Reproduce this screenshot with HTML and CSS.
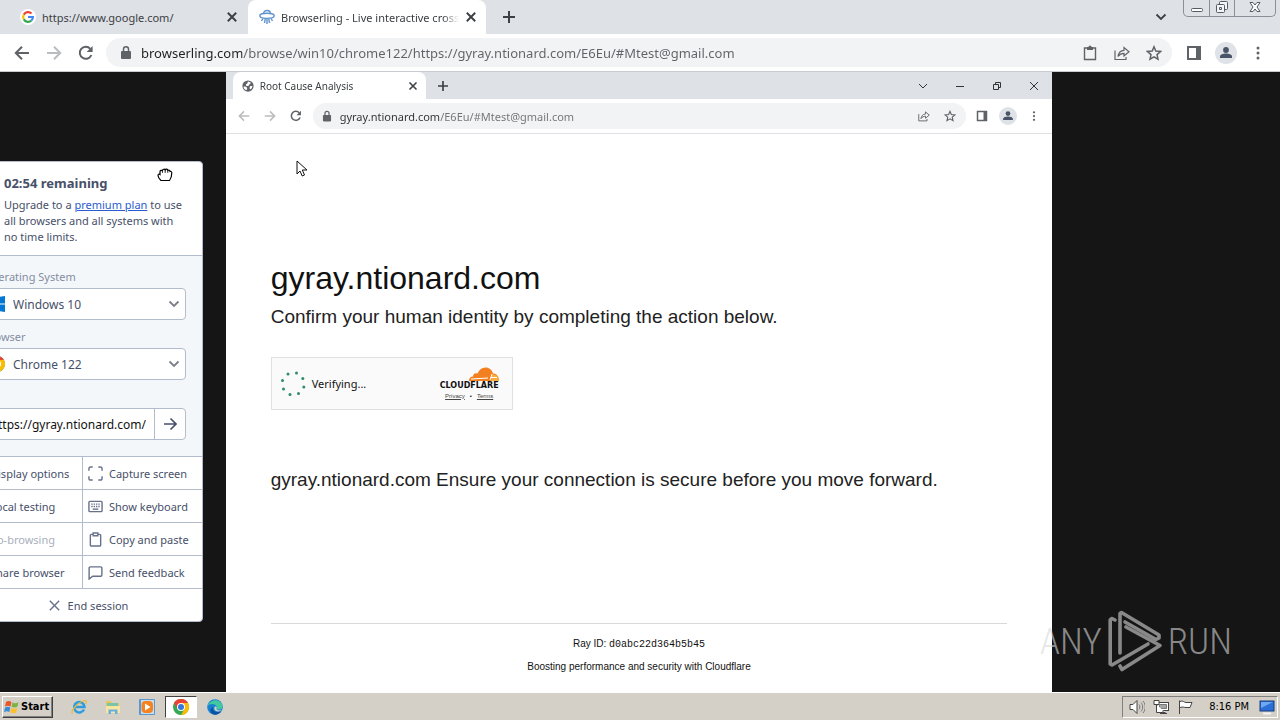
FILE: index.html
```html
<!DOCTYPE html>
<html lang="en">
<head>
  <meta charset="UTF-8">
  <meta name="viewport" content="width=device-width, initial-scale=1.0">
  <title>Browserling - Live interactive cross-browser testing</title>
  <link rel="stylesheet" href="styles.css">
</head>
<body>
  <!-- Shared icons -->
  <svg class="sprite" aria-hidden="true">
    <symbol id="i-back" viewBox="0 0 16 16"><path d="M15 8H2M8 1.8L1.8 8 8 14.2" fill="none" stroke="currentColor" stroke-width="2"/></symbol>
    <symbol id="i-forward" viewBox="0 0 16 16"><path d="M1 8h13M8 1.8L14.2 8 8 14.2" fill="none" stroke="currentColor" stroke-width="2"/></symbol>
    <symbol id="i-reload" viewBox="0 0 16 16"><path d="M13.4 10A6 6 0 1 1 12.3 3.800" fill="none" stroke="currentColor" stroke-width="2"/><path d="M14.600 1v6H8.600z" fill="currentColor"/></symbol>
    <symbol id="i-lock" viewBox="0 0 12 16"><rect x="1" y="6" width="10" height="8" rx="1" fill="currentColor"/><path d="M3.500 6.500V4.300a2.500 2.500 0 0 1 5 0v2.200" fill="none" stroke="currentColor" stroke-width="1.500"/></symbol>
    <symbol id="i-close" viewBox="0 0 10 10"><path d="M1.500 1.500l7 7M8.500 1.500l-7 7" fill="none" stroke="currentColor" stroke-width="1.600"/></symbol>
    <symbol id="i-plus" viewBox="0 0 12 12"><path d="M6 0v12M0 6h12" fill="none" stroke="currentColor" stroke-width="2"/></symbol>
    <symbol id="i-chevron" viewBox="0 0 12 12"><path d="M1.500 3.500L6 8l4.500-4.500" fill="none" stroke="currentColor" stroke-width="1.800"/></symbol>
    <symbol id="i-share" viewBox="0 0 16 16"><path d="M1 5.500V14.500H12V12M4 11.500C4.500 8 6.500 5.500 10 5.300V2.500L15 6.800 10 11V8.300C7.500 8.300 5.500 9.300 4 11.500z" fill="none" stroke="currentColor" stroke-width="1.200"/></symbol>
    <symbol id="i-star" viewBox="0 0 16 16"><path d="M8 1.800l1.800 4.300 4.700.400-3.500 3.100 1 4.600L8 11.800l-4 2.400 1-4.600L1.500 6.500l4.700-.400z" fill="none" stroke="currentColor" stroke-width="1.500"/></symbol>
    <symbol id="i-panel" viewBox="0 0 16 16"><path d="M1 1h14v14H1z" fill="currentColor"/><path d="M3 3h7v10H3z" fill="#fff"/></symbol>
    <symbol id="i-avatar" viewBox="0 0 22 22"><circle cx="11" cy="11" r="11" fill="#dfe2e6"/><circle cx="11" cy="8" r="2.900" fill="currentColor"/><path d="M5 16v-1.500c0-2 3-3 6-3s6 1 6 3V16z" fill="currentColor"/></symbol>
    <symbol id="i-menu" viewBox="0 0 16 16"><g fill="currentColor"><circle cx="8" cy="3" r="1.500"/><circle cx="8" cy="8" r="1.500"/><circle cx="8" cy="13" r="1.500"/></g></symbol>
    <symbol id="i-clipboard" viewBox="0 0 16 16"><path d="M2.500 3h11v11.500h-11z" fill="none" stroke="currentColor" stroke-width="1.400"/><path d="M5 2h1.500a1.500 1.500 0 0 1 3 0H11v3H5z" fill="currentColor"/></symbol>
    <symbol id="i-chrome" viewBox="0 0 16 16"><circle cx="8" cy="8" r="8" fill="#34a853"/><path d="M1.070 4A8 8 0 0 1 14.930 4H8L4.540 10z" fill="#ea4335"/><path d="M14.930 4A8 8 0 0 1 8 16L11.460 10 8 4z" fill="#fbbc05"/><circle cx="8" cy="8" r="4" fill="#fff"/><circle cx="8" cy="8" r="3" fill="#3478dc"/></symbol>
  </svg>

  <div class="browser">
    <div class="tab-strip">
      <div class="tab">
        <svg class="favicon" viewBox="0 0 16 16"><circle cx="8" cy="8" r="8" fill="#fff"/><g fill="none" stroke-width="2.200"><path d="M3.800 5.600A4.900 4.900 0 0 1 11.500 4.500" stroke="#ea4335"/><path d="M3.800 5.600a4.900 4.900 0 0 0 0 4.800" stroke="#fbbc05"/><path d="M3.800 10.400a4.900 4.900 0 0 0 7.600 1.100" stroke="#34a853"/><path d="M11.400 11.500A4.900 4.900 0 0 0 12.900 8H8" stroke="#4285f4"/></g></svg>
        <span class="tab-title">https://www.google.com/</span>
        <button class="tab-close" aria-label="Close tab"><svg><use href="#i-close"/></svg></button>
      </div>
      <div class="tab active">
        <svg class="favicon" viewBox="0 0 16 16" fill="none" stroke="#5f92cc" stroke-width="1.400"><ellipse cx="8" cy="6.800" rx="7.200" ry="2.600"/><path d="M4.500 5C4.500.300 11.500.300 11.500 5M4 9.500L2.500 12M6.200 9.800L5.500 14M8 10v5M9.800 9.800l.700 4.200M12 9.500l1.500 2.500"/></svg>
        <span class="tab-title">Browserling - Live interactive cross-browser</span>
        <button class="tab-close" aria-label="Close tab"><svg><use href="#i-close"/></svg></button>
      </div>
      <button class="new-tab" aria-label="New tab"><svg><use href="#i-plus"/></svg></button>
      <button class="tab-search" aria-label="Search tabs"><svg><use href="#i-chevron"/></svg></button>
      <div class="window-controls">
        <button aria-label="Minimize"><svg viewBox="0 0 14 14"><rect x="1.500" y="8.500" width="11" height="3" rx="1" fill="#fff" stroke="#555b66"/></svg></button>
        <button aria-label="Restore"><svg viewBox="0 0 14 14" fill="#f4f5f7" stroke="#555b66"><rect x="4.500" y="1.500" width="8" height="8" rx="1"/><rect x="1.500" y="4.500" width="8" height="8" rx="1"/><path d="M4.500 7.500h2v2h-2z"/></svg></button>
        <button class="wide" aria-label="Close window"><svg viewBox="0 0 14 14"><path d="M2 2.500h3l2 2.500 2-2.500h3L9 7l3 4.500H9L7 9l-2 2.500H2L5 7z" fill="#fff" stroke="#555b66"/></svg></button>
      </div>
    </div>

    <div class="toolbar">
      <button class="icon-btn" aria-label="Back"><svg><use href="#i-back"/></svg></button>
      <button class="icon-btn muted" aria-label="Forward"><svg><use href="#i-forward"/></svg></button>
      <button class="icon-btn" aria-label="Reload"><svg><use href="#i-reload"/></svg></button>
      <div class="omnibox">
        <svg class="lock"><use href="#i-lock"/></svg>
        <input type="text" aria-label="Address" value="browserling.com/browse/win10/chrome122/https://gyray.ntionard.com/E6Eu/#Mtest@gmail.com">
        <button class="icon-btn" aria-label="Paste"><svg><use href="#i-clipboard"/></svg></button>
        <button class="icon-btn" aria-label="Share"><svg><use href="#i-share"/></svg></button>
        <button class="icon-btn" aria-label="Bookmark"><svg><use href="#i-star"/></svg></button>
      </div>
      <button class="icon-btn" aria-label="Side panel"><svg><use href="#i-panel"/></svg></button>
      <button class="icon-btn avatar" aria-label="Profile"><svg><use href="#i-avatar"/></svg></button>
      <button class="icon-btn" aria-label="Menu"><svg><use href="#i-menu"/></svg></button>
    </div>
  </div>

  <main class="stage">
    <div class="remote">
      <div class="tab-strip">
        <div class="tab active">
          <svg class="favicon" viewBox="0 0 16 16"><circle cx="8" cy="8" r="7.500" fill="#5f6368"/><path d="M2 8.500L6 9l1 3-1.500 1.500C3.500 12.500 2 11 2 8.500zM8 2l4 1.500L10 6 8.500 8H6L5 6l2-1.500zM11 8h3l-1 3-2 1.500-1-2z" fill="#fff"/></svg>
          <span class="tab-title">Root Cause Analysis</span>
          <button class="tab-close" aria-label="Close tab"><svg><use href="#i-close"/></svg></button>
        </div>
        <button class="new-tab" aria-label="New tab"><svg><use href="#i-plus"/></svg></button>
        <div class="remote-controls">
          <button aria-label="Search tabs"><svg viewBox="0 0 10 10"><path d="M1 3l4 4 4-4"/></svg></button>
          <button aria-label="Minimize"><svg viewBox="0 0 10 10"><path d="M1 5.500h8"/></svg></button>
          <button aria-label="Restore"><svg viewBox="0 0 10 10"><path d="M1.500 3.500h5v5h-5zM3.500 3.500v-2h5v5h-2"/></svg></button>
          <button aria-label="Close window"><svg viewBox="0 0 10 10"><path d="M1 1l8 8M9 1L1 9"/></svg></button>
        </div>
      </div>

      <div class="toolbar">
        <button class="icon-btn muted" aria-label="Back"><svg><use href="#i-back"/></svg></button>
        <button class="icon-btn muted" aria-label="Forward"><svg><use href="#i-forward"/></svg></button>
        <button class="icon-btn" aria-label="Reload"><svg><use href="#i-reload"/></svg></button>
        <div class="omnibox">
          <svg class="lock"><use href="#i-lock"/></svg>
          <input type="text" aria-label="Remote address" value="gyray.ntionard.com/E6Eu/#Mtest@gmail.com">
          <button class="icon-btn" aria-label="Share"><svg><use href="#i-share"/></svg></button>
          <button class="icon-btn" aria-label="Bookmark"><svg><use href="#i-star"/></svg></button>
        </div>
        <button class="icon-btn" aria-label="Side panel"><svg><use href="#i-panel"/></svg></button>
        <button class="icon-btn avatar" aria-label="Profile"><svg><use href="#i-avatar"/></svg></button>
        <button class="icon-btn" aria-label="Menu"><svg><use href="#i-menu"/></svg></button>
      </div>

      <div class="page">
        <h1>gyray.ntionard.com</h1>
        <p class="lead">Confirm your human identity by completing the action below.</p>
        <div class="challenge">
          <svg class="spinner" viewBox="0 0 26 26" fill="#2f8a68"><circle cx="16.500" cy="2" r="1.500"/><circle cx="8" cy="3" r="1.500"/><circle cx="2.500" cy="9.500" r="1.500"/><circle cx="3.500" cy="18" r="1.500"/><circle cx="10" cy="23.500" r="1.500"/><circle cx="18.500" cy="22.500" r="1.500"/><circle cx="23.800" cy="16" r="1.500"/><circle cx="22.800" cy="7.500" r="1.500"/></svg>
          <span class="verifying">Verifying...</span>
          <div class="cf-brand">
            <svg class="cf-cloud" viewBox="0 0 30 14"><path d="M0 14c0-3 1.500-4.500 4-4.500C4 6.500 6.500 5.500 8.500 6.500 10 2.500 13 .500 16.500.500c4 0 6.500 2.500 7.500 6 3.500 0 6 2.500 6 7.500z" fill="#f38020"/><path d="M23 7.500c4 0 7 2 7 6.500h-8z" fill="#faae40"/><path d="M2 12l17-1M21 13l2-6M22 10.500h6" stroke="#fff" fill="none"/></svg>
            <span class="cf-name">CLOUDFLARE</span>
            <span class="cf-links"><a href="#">Privacy</a><span>•</span><a href="#">Terms</a></span>
          </div>
        </div>
        <p class="lead notice">gyray.ntionard.com Ensure your connection is secure before you move forward.</p>
        <footer>
          <div>Ray ID: <code>d0abc22d364b5b45</code></div>
          <div>Boosting performance and security with Cloudflare</div>
        </footer>
      </div>
      <svg class="pointer" viewBox="0 0 12 18"><path d="M1 1v13l3-3 2.200 5 2.300-1-2.200-5H11z" fill="#fff" stroke="#111"/></svg>
    </div>

    <aside class="session">
      <header>
        <h2>02:54 remaining</h2>
        <p>Upgrade to a <a href="#">premium plan</a> to use all browsers and all systems with no time limits.</p>
      </header>
      <form>
        <label for="os">Operating System</label>
        <div class="select">
          <svg class="select-icon" viewBox="0 0 16 16" fill="#0078d4"><path d="M0 2.300l7-1v6.200H0zM8 1.100L16 0v7.500H8zM0 8.500h7v6.200l-7-1zM8 8.500h8V16l-8-1.100z"/></svg>
          <select id="os"><option>Windows 10</option></select>
          <svg class="select-arrow"><use href="#i-chevron"/></svg>
        </div>
        <label for="browser">Browser</label>
        <div class="select">
          <svg class="select-icon"><use href="#i-chrome"/></svg>
          <select id="browser"><option>Chrome 122</option></select>
          <svg class="select-arrow"><use href="#i-chevron"/></svg>
        </div>
        <div class="url">
          <input type="text" aria-label="URL" value="https://gyray.ntionard.com/">
          <button type="button" aria-label="Go"><svg viewBox="0 0 14 14" fill="none" stroke="currentColor" stroke-width="1.600"><path d="M1 7h12M7.500 1.500L13 7l-5.500 5.500"/></svg></button>
        </div>
      </form>
      <div class="actions">
        <button class="no-icon">Display options</button>
        <button><svg viewBox="0 0 16 16"><path d="M1 5V3a2 2 0 0 1 2-2h2M11 1h2a2 2 0 0 1 2 2v2M15 11v2a2 2 0 0 1-2 2h-2M5 15H3a2 2 0 0 1-2-2v-2"/></svg>Capture screen</button>
        <button class="no-icon">Local testing</button>
        <button><svg viewBox="0 0 16 16"><rect x="1" y="2.500" width="14" height="11" rx="1"/><path d="M3.500 5.500h9M3.500 8h9" stroke-dasharray="1.500 1"/><path d="M5 10.800h6"/></svg>Show keyboard</button>
        <button class="no-icon" disabled>Co-browsing</button>
        <button><svg viewBox="0 0 16 16"><path d="M5.500 2.500h-2a1 1 0 0 0-1 1V14a1 1 0 0 0 1 1h9a1 1 0 0 0 1-1V3.500a1 1 0 0 0-1-1h-2M5.500 1h5v3h-5z"/></svg>Copy and paste</button>
        <button class="no-icon">Share browser</button>
        <button><svg viewBox="0 0 16 16"><path d="M2.500 2h11a1.300 1.300 0 0 1 1.300 1.300v7.400a1.300 1.300 0 0 1-1.300 1.300H5l-3.800 3V3.300A1.300 1.300 0 0 1 2.500 2z"/></svg>Send feedback</button>
        <button class="end"><svg viewBox="0 0 16 16"><path d="M3 3l10 10M13 3L3 13"/></svg>End session</button>
      </div>
      <svg class="grab" viewBox="0 0 16 14"><path d="M4 12.500C2.500 11 1 9 1 7.500c0-1.200 1-1.700 2-1V3.500c0-1.500 2-1.500 2.300-.300C5.300.800 8 .800 8.200 2c.500-1.300 2.500-1 2.600.500 1-.800 2.200-.300 2.200 1 1-.300 1.800.200 1.800 1.300 0 2.700-.300 5.200-2.300 7.700z" fill="#fff" stroke="#000" stroke-width="1.200"/><path d="M5.500 3v2M8.200 2.500V5M10.800 3v2" stroke="#000" stroke-width=".700"/></svg>
    </aside>

    <div class="watermark">
      <span>ANY</span>
      <svg viewBox="0 0 54 62" fill="none" stroke="currentColor" stroke-width="3.600" stroke-linejoin="round" stroke-linecap="round"><path d="M7 10L4 8.500 2.200 10v44L4 55l36-21"/><path d="M12 43V3.500L13.500 2.500 51 25v3l-3 1.500L17 12"/><path d="M18 17v0l34 18.500L14 59.500 12 56"/></svg>
      <span>RUN</span>
    </div>
  </main>

  <div class="taskbar">
    <button class="start">
      <svg viewBox="0 0 16 16"><path d="M2 3c2-1.500 4-1 5.500 0L6.500 7.500c-2-1-3.500-1-5.500 0z" fill="#e8562a"/><path d="M8.500 3.500c2 1 4 1 6-.500l-1 4.500c-2 1.200-4 1.200-6 .300z" fill="#7cb342"/><path d="M1 8.700c2-1.200 3.500-1 5.300-.200l-1 4.500c-2-1-3.300-1-5.300.300z" fill="#3b8ad8"/><path d="M7.300 9c2 .900 4 .900 6-.300l-1 4.500c-2 1.300-4 1.300-6 .300z" fill="#fbc02d"/></svg>
      Start
    </button>
    <div class="quick">
      <button aria-label="Internet Explorer"><svg viewBox="0 0 16 16" fill="none"><path d="M13 10.500A5.200 5.200 0 1 1 13.500 8H4" stroke="#2e9de0" stroke-width="2.500"/><path d="M1.500 14.500C-1 12 8 2 14.500 1.500c2 .500.500 2.500 0 3.500" stroke="#f0b92e" stroke-width="1.200"/></svg></button>
      <button aria-label="File Explorer"><svg viewBox="0 0 16 16"><path d="M1 2h5l1 2h7v10H1z" fill="#e9c65b"/><path d="M2 4h11v4H2z" fill="#79c5a6"/><path d="M1 7h14v7H1z" fill="#f8e6a0"/><path d="M3.500 15v-4.500h9V15H10v-2.500H6V15z" fill="#69aee0"/></svg></button>
      <button aria-label="Media Player"><svg viewBox="0 0 16 16"><rect width="16" height="16" rx="1" fill="#5c98cf"/><rect x="2" y="1" width="13" height="14" fill="#c9ddec"/><rect x="2.500" y="2" width="11.500" height="12" rx="4" fill="#f58220"/><path d="M6 4.500v7L11.500 8z" fill="#fff"/></svg></button>
      <button class="running" aria-label="Chrome"><svg><use href="#i-chrome"/></svg></button>
      <button aria-label="Edge"><svg viewBox="0 0 16 16"><circle cx="8" cy="8" r="7.800" fill="#1780d0"/><path d="M.500 7C2 1 12-2 15.500 6c.500 3-1.500 5-5 4.500C9 9.500 11 8 8.500 6 6 4 2 5 .500 7z" fill="#42c8a0"/><path d="M6 8c-1 3 2 6.500 8 4.500-3 4-8 4-10 1-1.500-2.500 0-5 2-5.500z" fill="#0b52a0"/><path d="M8 7.500c2-.500 2 1.500 1.500 2.500 1 2 4 1.500 5.500.500-1 2-4.500 2.500-6.500 1.200C7 10.500 7 9 8 7.500z" fill="#d4d0c8"/></svg></button>
    </div>
    <div class="tray">
      <svg viewBox="0 0 16 16"><path d="M1 5.500h3L8 1.500v13l-4-4H1z" fill="#fff" stroke="#444"/><path d="M10 5.500c1.200 1.500 1.200 3.500 0 5M12 3.500c2.200 2.500 2.200 6.500 0 9M14 2c3 3.500 3 8.500 0 12" fill="none" stroke="#777"/></svg>
      <svg viewBox="0 0 16 16" stroke="#444"><rect x="4.500" y="3.500" width="11" height="8" fill="#fff"/><path d="M6.500 5.500h7v4h-7z" fill="#a6a6a6" stroke="#777"/><path d="M1 1.500h5v4H1zM3.500 5.500v8h9M7 14.500h7M10 11.500v3" fill="#fff"/></svg>
      <svg viewBox="0 0 16 16"><path d="M2.500 15V1.500M3 2.500c3-1.500 4 1 6 1h6l-2 5H9c-2 0-3-1-6 0" fill="#fff" stroke="#444"/></svg>
      <time>8:16 PM</time>
      <svg viewBox="0 0 16 16"><rect x="1" y="2" width="14" height="10" fill="#2b6fd6" stroke="#173d80"/><path d="M2 3h12L2 9z" fill="#6fa8f2"/><path d="M4 14.500h8" stroke="#f4f4f4" stroke-width="2"/></svg>
    </div>
  </div>
</body>
</html>
```
FILE: styles.css
```css
* {
  box-sizing: border-box;
}

body {
  margin: 0;
  height: 100vh;
  display: flex;
  flex-direction: column;
  overflow: hidden;
  background-color: #151515;
  font-family: "Noto Sans", sans-serif;
  font-size: 11px;
  color: #333;
}

button {
  border: none;
  background: none;
  padding: 0;
  font: inherit;
  color: inherit;
}

input,
select {
  font: inherit;
  min-width: 0;
}

svg {
  display: block;
  flex: none;
}

.sprite {
  position: absolute;
  width: 0;
  height: 0;
}

/* Outer browser */
.browser {
  flex: none;
  background-color: #fff;
  border-bottom: 1px solid #c8cacd;
}

.tab-strip {
  display: flex;
  align-items: center;
  height: 34px;
  background-color: #dee1e6;
}

.tab {
  display: flex;
  align-items: center;
  gap: 6px;
  align-self: stretch;
  width: 248px;
  padding: 0 10px 0 20px;
  color: #3c4043;
}

.tab.active {
  width: 238px;
  padding: 0 9px 0 11px;
  background-color: #fff;
  border-radius: 8px 8px 0 0;
}

.tab-title {
  flex: 1;
  overflow: hidden;
  white-space: nowrap;
}

.tab.active .tab-title {
  mask-image: linear-gradient(to right, #000 calc(100% - 16px), transparent);
}

.favicon {
  width: 16px;
  height: 16px;
}

.tab-close svg {
  width: 12px;
  height: 12px;
}

.new-tab {
  margin-left: 17px;
  color: #3c4043;
}

.new-tab svg {
  width: 12px;
  height: 12px;
}

.tab-search {
  margin-left: auto;
  margin-right: 16px;
  color: #3c4043;
}

.tab-search svg {
  width: 12px;
  height: 12px;
}

.window-controls {
  display: flex;
  align-self: flex-start;
  margin-right: 4px;
  border: 1px solid #8b8e96;
  border-top: none;
  border-radius: 0 0 5px 5px;
}

.window-controls button {
  display: flex;
  justify-content: center;
  width: 25px;
  height: 16px;
}

.window-controls button + button {
  border-left: 1px solid #8b8e96;
}

.window-controls .wide {
  width: 41px;
}

.window-controls svg {
  width: 14px;
  height: 14px;
}

.toolbar {
  display: flex;
  align-items: center;
  height: 37px;
  padding: 0 6px;
  background-color: #fff;
  color: #5f6368;
}

.icon-btn {
  display: flex;
  justify-content: center;
  flex: none;
  width: 32px;
}

.icon-btn svg {
  width: 16px;
  height: 16px;
}

.icon-btn.avatar svg {
  width: 22px;
  height: 22px;
  color: #4a5468;
}

.muted {
  color: #babcbe;
}

.omnibox {
  display: flex;
  align-items: center;
  flex: 1;
  min-width: 0;
  height: 29px;
  margin-left: 4px;
  margin-right: 6px;
  padding: 0 2px 0 14px;
  border-radius: 15px;
  background-color: #f1f3f4;
}

.lock {
  width: 12px;
  height: 16px;
}

.omnibox input {
  flex: 1;
  margin-left: 9px;
  padding: 0;
  border: none;
  outline: none;
  font-size: 13px;
  /* host is darker than the path */
  color: transparent;
  background: linear-gradient(to right, #202124 101px, #5f6368 101px);
  background-clip: text;
  -webkit-background-clip: text;
}

/* Stage with the remote desktop */
.stage {
  position: relative;
  display: flex;
  justify-content: center;
  flex: 1;
  min-height: 0;
  padding-right: 2px;
}

.remote {
  position: relative;
  display: flex;
  flex-direction: column;
  height: 100%;
  aspect-ratio: 4 / 3;
  background-color: #fff;
}

.remote .tab-strip {
  flex: none;
  height: 27px;
  padding-left: 7px;
}

.remote .tab.active {
  width: 193px;
  padding: 0 8px 0 9px;
}

.remote .tab-title {
  font-size: 10px;
}

.remote .favicon {
  width: 12px;
  height: 12px;
}

.remote .tab-close svg {
  width: 10px;
  height: 10px;
}

.remote .new-tab {
  margin-left: 12px;
}

.remote .new-tab svg {
  width: 10px;
  height: 10px;
}

.remote-controls {
  display: flex;
  margin-left: auto;
}

.remote-controls button {
  display: flex;
  justify-content: center;
  width: 37px;
}

.remote-controls svg {
  width: 10px;
  height: 10px;
  fill: none;
  stroke: #333;
}

.remote .toolbar {
  flex: none;
  height: 35px;
  padding: 0 5px;
  border-bottom: 1px solid #dfe1e4;
}

.remote .icon-btn {
  width: 26px;
}

.remote .icon-btn svg {
  width: 12px;
  height: 12px;
}

.remote .icon-btn.avatar svg {
  width: 18px;
  height: 18px;
}

.remote .omnibox {
  height: 26px;
  margin-right: 3px;
  padding: 0 3px 0 9px;
}

.remote .lock {
  width: 10px;
  height: 13px;
}

.remote .omnibox input {
  margin-left: 8px;
  font-size: 11px;
  background-image: linear-gradient(to right, #303134 100px, #6f7377 100px);
}

.page {
  display: flex;
  flex-direction: column;
  align-items: flex-start;
  flex: 1;
  padding: 124px 45px 14px;
  font-family: "Liberation Sans", Arial, sans-serif;
  color: #111;
}

.page h1 {
  margin: 0;
  font-size: 32px;
  font-weight: 400;
  line-height: 40px;
}

.lead {
  margin: 5px 0 0;
  font-size: 19px;
  line-height: 28px;
  color: #222;
}

.challenge {
  display: flex;
  align-items: center;
  gap: 6px;
  width: 242px;
  height: 53px;
  margin-top: 26px;
  padding: 0 13px 0 8px;
  border: 1px solid #e0e0e0;
  background-color: #fafafa;
}

.spinner {
  width: 26px;
  height: 26px;
}

.verifying {
  font-family: "Noto Sans", sans-serif;
  font-size: 11px;
}

.cf-brand {
  display: flex;
  flex-direction: column;
  align-items: center;
  margin-left: auto;
}

.cf-cloud {
  width: 30px;
  height: 14px;
  align-self: flex-end;
}

.cf-name {
  font-family: "DejaVu Sans", sans-serif;
  font-size: 8px;
  font-weight: 700;
  line-height: 10px;
  color: #111;
}

.cf-links {
  display: flex;
  gap: 5px;
  font-size: 6px;
  line-height: 10px;
}

.cf-links a {
  color: #444;
}

.notice {
  margin-top: 56px;
}

.page footer {
  align-self: stretch;
  margin-top: auto;
  padding-top: 9px;
  border-top: 1px solid #d9d9d9;
  text-align: center;
  font-size: 10px;
  line-height: 22px;
}

.page code {
  font-family: "Liberation Mono", monospace;
  font-size: 10px;
}

.pointer {
  position: absolute;
  left: 70px;
  top: 88px;
  width: 12px;
  height: 18px;
}

/* Session panel */
.session {
  position: absolute;
  left: -38px;
  top: 89px;
  width: 241px;
  overflow: hidden;
  border: 1px solid #b3bccd;
  border-radius: 4px;
  background-color: #fff;
  color: #475069;
}

.session header {
  padding: 13px 14px 10px 41px;
  border-bottom: 1px solid #b3bccd;
}

.session h2 {
  margin: 0 0 6px;
  font-size: 13px;
  line-height: 16px;
}

.session p {
  margin: 0;
  line-height: 16px;
}

.session p a {
  color: #2b5bd0;
}

.session form {
  padding: 13px 16px 16px;
  background-color: #f3f7fa;
}

.session label {
  display: block;
  margin-bottom: 3px;
  padding-left: 4px;
  line-height: 16px;
  color: #858da1;
}

.select {
  display: flex;
  align-items: center;
  position: relative;
  height: 32px;
  margin-bottom: 9px;
  border: 1px solid #b3bccd;
  border-radius: 4px;
  background-color: #fff;
}

.select-icon {
  width: 16px;
  height: 16px;
  margin-left: 9px;
}

.select select {
  flex: 1;
  height: 100%;
  padding: 0 24px 0 8px;
  border: none;
  outline: none;
  appearance: none;
  background: none;
  font-size: 12px;
  color: #475069;
}

.select-arrow {
  position: absolute;
  right: 5px;
  width: 12px;
  height: 12px;
  color: #7b7f88;
  pointer-events: none;
}

.url {
  display: flex;
  height: 32px;
  margin-top: 28px;
  border: 1px solid #b3bccd;
  border-radius: 4px;
  background-color: #fff;
}

.url input {
  flex: 1;
  padding: 0 8px 0 0;
  border: none;
  outline: none;
  background: none;
  font-size: 12px;
  text-align: right;
  color: #111;
}

.url button {
  display: flex;
  align-items: center;
  justify-content: center;
  width: 31px;
  border-left: 1px solid #b3bccd;
}

.url svg {
  width: 14px;
  height: 14px;
}

.actions {
  display: grid;
  grid-template-columns: 119px 1fr;
}

.actions button {
  display: flex;
  align-items: center;
  gap: 6px;
  height: 33px;
  padding-left: 5px;
  border-top: 1px solid #b3bccd;
  white-space: nowrap;
}

.actions button:nth-child(even) {
  border-left: 1px solid #b3bccd;
}

.actions .no-icon {
  padding-left: 27px;
}

.actions button:disabled {
  color: #a9afbd;
}

.actions .end {
  grid-column: 1 / -1;
  justify-content: center;
  padding-left: 10px;
}

.actions svg {
  width: 15px;
  height: 15px;
  fill: none;
  stroke: #68718a;
  stroke-width: 1.5;
}

.grab {
  position: absolute;
  right: 29px;
  top: 6px;
  width: 16px;
  height: 14px;
}

.watermark {
  position: absolute;
  right: 48px;
  bottom: 20px;
  display: flex;
  align-items: center;
  gap: 6px;
  font-family: "Liberation Sans Narrow", "Roboto Condensed", Roboto, sans-serif;
  font-size: 37px;
  font-weight: 300;
  color: rgba(215, 215, 215, 0.6);
}

.watermark svg {
  width: 54px;
  height: 62px;
}

/* Taskbar */
.taskbar {
  display: flex;
  align-items: center;
  flex: none;
  height: 28px;
  padding: 0 2px;
  border-top: 1px solid #fff;
  background-color: #d4d0c8;
  font-family: "DejaVu Sans Condensed", "DejaVu Sans", sans-serif;
  color: #000;
}

.start {
  display: flex;
  align-items: center;
  gap: 1px;
  height: 22px;
  padding: 0 3px 0 1px;
  border: 1px solid;
  border-color: #fff #404040 #404040 #fff;
  box-shadow: inset -1px -1px #808080;
  font-size: 11px;
  font-weight: 700;
}

.start svg {
  width: 16px;
  height: 16px;
}

.quick {
  display: flex;
  margin-left: 9px;
}

.quick button {
  display: flex;
  align-items: center;
  justify-content: center;
  width: 34px;
  height: 22px;
}

.quick .running {
  width: 32px;
  margin: 0 1px;
  border: 1px solid;
  border-color: #404040 #fff #fff #404040;
  background-color: #fff;
}

.quick svg {
  width: 16px;
  height: 16px;
}

.tray {
  display: flex;
  align-items: center;
  gap: 8px;
  height: 22px;
  margin-left: auto;
  padding: 0 2px 0 6px;
  border: 1px solid;
  border-color: #808080 #fff #fff #808080;
  font-size: 11px;
}

.tray svg {
  width: 16px;
  height: 16px;
}

.tray time {
  margin: 0 2px 0 8px;
}
```
